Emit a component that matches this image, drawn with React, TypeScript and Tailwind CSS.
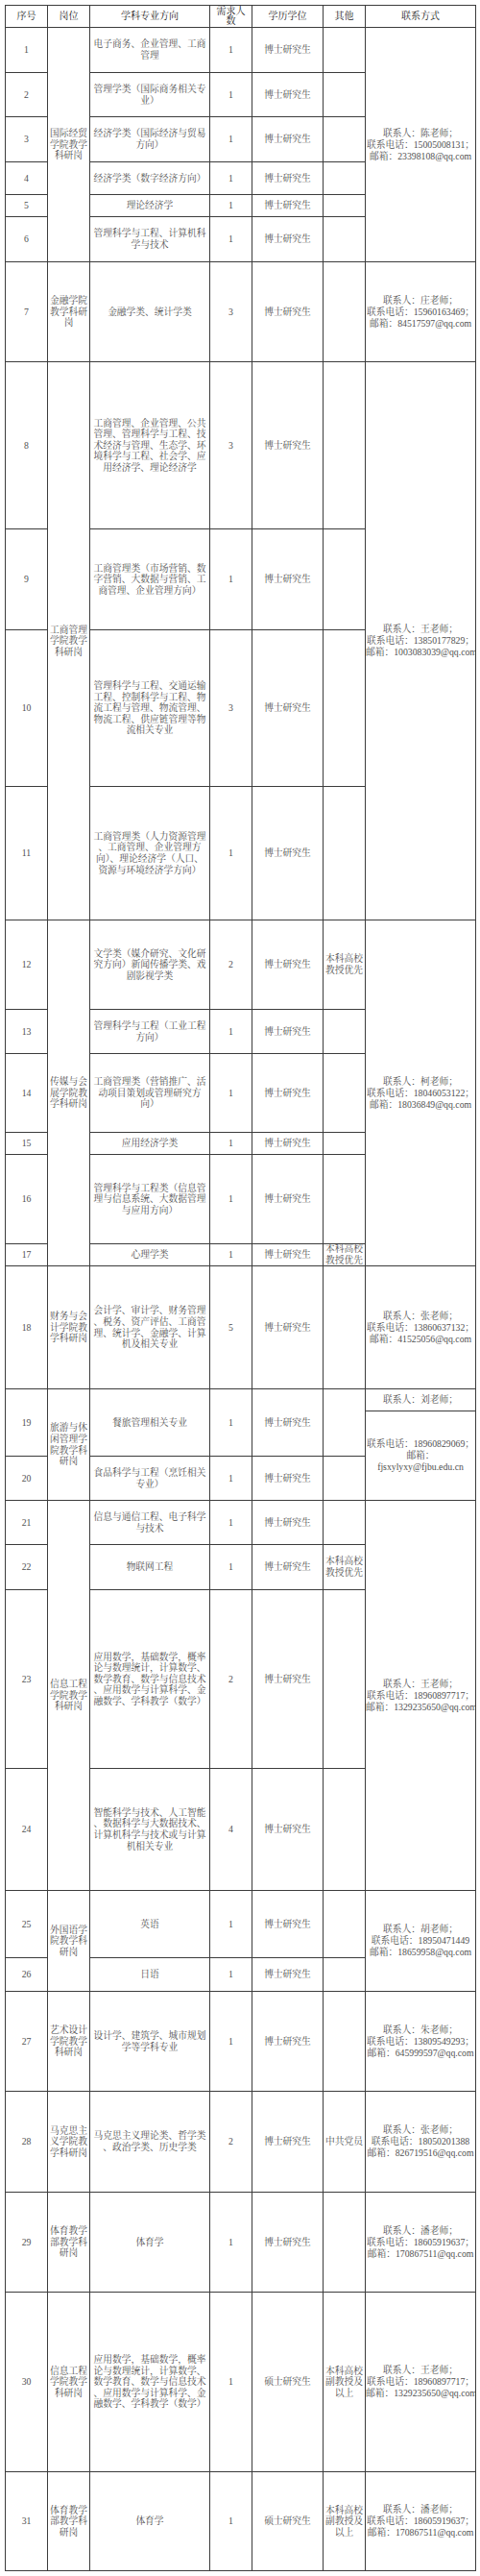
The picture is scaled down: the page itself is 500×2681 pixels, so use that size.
import React from "react";

type Block = { t: string; span?: string };
type Row = {
  n?: string;
  span?: string;
  pos?: Block;
  m?: string;
  c?: string;
  d?: string;
  other?: string;
  contact?: Block;
  extra?: Block;
};

const MATH =
  "应用数学，基础数学，概率|论与数理统计，计算数学、|数学教育、数学与信息技术|、应用数学与计算科学、金|融数学、学科教学（数学）";

const rows: Row[] = [
  {
    n: "1",
    pos: { t: "国际经贸|学院教学|科研岗", span: "row-span-6" },
    m: "电子商务、企业管理、工商|管理",
    c: "1",
    contact: { t: "联系人：陈老师；|联系电话：15005008131；|邮箱：23398108@qq.com", span: "row-span-6" },
  },
  { n: "2", m: "管理学类（国际商务相关专|业）", c: "1" },
  { n: "3", m: "经济学类（国际经济与贸易|方向）", c: "1" },
  { n: "4", m: "经济学类（数字经济方向）", c: "1" },
  { n: "5", m: "理论经济学", c: "1" },
  { n: "6", m: "管理科学与工程、计算机科|学与技术", c: "1" },
  {
    n: "7",
    pos: { t: "金融学院|教学科研|岗" },
    m: "金融学类、统计学类",
    c: "3",
    contact: { t: "联系人：庄老师；|联系电话：15960163469；|邮箱：84517597@qq.com" },
  },
  {
    n: "8",
    pos: { t: "工商管理|学院教学|科研岗", span: "row-span-4" },
    m: "工商管理、企业管理、公共|管理、管理科学与工程、技|术经济与管理、生态学、环|境科学与工程、社会学、应|用经济学、理论经济学",
    c: "3",
    contact: { t: "联系人：王老师；|联系电话：13850177829；|邮箱：1003083039@qq.com", span: "row-span-4" },
  },
  { n: "9", m: "工商管理类（市场营销、数|字营销、大数据与营销、工|商管理、企业管理方向）", c: "1" },
  {
    n: "10",
    m: "管理科学与工程、交通运输|工程、控制科学与工程、物|流工程与管理、物流管理、|物流工程、供应链管理等物|流相关专业",
    c: "3",
  },
  {
    n: "11",
    m: "工商管理类（人力资源管理|、工商管理、企业管理方|向）、理论经济学（人口、|资源与环境经济学方向）",
    c: "1",
  },
  {
    n: "12",
    pos: { t: "传媒与会|展学院教|学科研岗", span: "row-span-6" },
    m: "文学类（媒介研究、文化研|究方向）新闻传播学类、戏|剧影视学类",
    c: "2",
    other: "本科高校|教授优先",
    contact: { t: "联系人：柯老师；|联系电话：18046053122；|邮箱：18036849@qq.com", span: "row-span-6" },
  },
  { n: "13", m: "管理科学与工程（工业工程|方向）", c: "1" },
  { n: "14", m: "工商管理类（营销推广、活|动项目策划或管理研究方|向）", c: "1" },
  { n: "15", m: "应用经济学类", c: "1" },
  { n: "16", m: "管理科学与工程类（信息管|理与信息系统、大数据管理|与应用方向）", c: "1" },
  { n: "17", m: "心理学类", c: "1", other: "本科高校|教授优先" },
  {
    n: "18",
    pos: { t: "财务与会|计学院教|学科研岗" },
    m: "会计学、审计学、财务管理|、税务、资产评估、工商管|理、统计学、金融学、计算|机及相关专业",
    c: "5",
    contact: { t: "联系人：张老师；|联系电话：13860637132；|邮箱：41525056@qq.com" },
  },
  {
    n: "19",
    span: "row-span-2",
    pos: { t: "旅游与休|闲管理学|院教学科|研岗", span: "row-span-3" },
    m: "餐旅管理相关专业",
    c: "1",
    contact: { t: "联系人：刘老师；" },
  },
  { extra: { t: "联系电话：18960829069；|邮箱：|fjsxylyxy@fjbu.edu.cn", span: "row-span-2" } },
  { n: "20", m: "食品科学与工程（烹饪相关|专业）", c: "1" },
  {
    n: "21",
    pos: { t: "信息工程|学院教学|科研岗", span: "row-span-4" },
    m: "信息与通信工程、电子科学|与技术",
    c: "1",
    contact: { t: "联系人：王老师；|联系电话：18960897717；|邮箱：1329235650@qq.com", span: "row-span-4" },
  },
  { n: "22", m: "物联网工程", c: "1", other: "本科高校|教授优先" },
  { n: "23", m: MATH, c: "2" },
  {
    n: "24",
    m: "智能科学与技术、人工智能|、数据科学与大数据技术、|计算机科学与技术或与计算|机相关专业",
    c: "4",
  },
  {
    n: "25",
    pos: { t: "外国语学|院教学科|研岗", span: "row-span-2" },
    m: "英语",
    c: "1",
    contact: { t: "联系人：胡老师；|联系电话：18950471449|邮箱：18659958@qq.com", span: "row-span-2" },
  },
  { n: "26", m: "日语", c: "1" },
  {
    n: "27",
    pos: { t: "艺术设计|学院教学|科研岗" },
    m: "设计学、建筑学、城市规划|学等学科专业",
    c: "1",
    contact: { t: "联系人：朱老师；|联系电话：13809549293；|邮箱：645999597@qq.com" },
  },
  {
    n: "28",
    pos: { t: "马克思主|义学院教|学科研岗" },
    m: "马克思主义理论类、哲学类|、政治学类、历史学类",
    c: "2",
    other: "中共党员",
    contact: { t: "联系人：张老师；|联系电话：18050201388|邮箱：826719516@qq.com" },
  },
  {
    n: "29",
    pos: { t: "体育教学|部教学科|研岗" },
    m: "体育学",
    c: "1",
    contact: { t: "联系人：潘老师；|联系电话：18605919637；|邮箱：170867511@qq.com" },
  },
  {
    n: "30",
    pos: { t: "信息工程|学院教学|科研岗" },
    m: MATH,
    c: "1",
    d: "硕士研究生",
    other: "本科高校|副教授及|以上",
    contact: { t: "联系人：王老师；|联系电话：18960897717；|邮箱：1329235650@qq.com" },
  },
  {
    n: "31",
    pos: { t: "体育教学|部教学科|研岗" },
    m: "体育学",
    c: "1",
    d: "硕士研究生",
    other: "本科高校|副教授及|以上",
    contact: { t: "联系人：潘老师；|联系电话：18605919637；|邮箱：170867511@qq.com" },
  },
];

function Cell({ text = "", span = "", leading = "leading-[11.6px]" }: { text?: string; span?: string; leading?: string }) {
  return (
    <div className={`${span} ${leading} flex flex-col justify-center overflow-hidden bg-white`}>
      {text
        ? text.split("|").map((line, i) => (
            <div key={i} className="whitespace-nowrap text-center">
              {line}
            </div>
          ))
        : null}
    </div>
  );
}

const HEADERS = ["序号", "岗位", "学科专业方向", "需求人|数", "学历学位", "其他", "联系方式"];

export default function App() {
  return (
    <div className="h-[2681px] w-[500px] overflow-hidden bg-white pl-[5px] pt-[5px]">
      <div
        className="grid w-[491px] grid-cols-[43px_43px_124px_43px_73px_43px_114px] grid-rows-[22px_46px_45px_46px_33px_22px_46px_103px_173px_104px_162px_138px_92px_45px_81px_22px_92px_22px_127px_22px_46px_45px_45px_46px_185px_126px_69px_34px_103px_104px_103px_186px_102px] gap-px bg-[#3c3c3c] p-px font-['Liberation_Serif','Noto_Serif_CJK_SC','Noto_Sans_CJK_SC',serif] text-[9.75px] text-[#505050]"
      >
        {HEADERS.map((h) => (
          <div key={h} className="flex flex-col justify-center bg-white text-[#222] leading-[10px] text-[10px]">
            {h.split("|").map((line) => (
              <div key={line} className="whitespace-nowrap text-center">
                {line}
              </div>
            ))}
          </div>
        ))}
        {rows.map((r, i) => {
          if (r.extra) {
            return <Cell key={i} text={r.extra.t} span={r.extra.span} leading="leading-[12px]" />;
          }
          const s = r.span ?? "";
          return (
            <React.Fragment key={i}>
              <Cell text={r.n} span={s} />
              {r.pos ? <Cell text={r.pos.t} span={r.pos.span} /> : null}
              <Cell text={r.m} span={s} />
              <Cell text={r.c} span={s} />
              <Cell text={r.d ?? "博士研究生"} span={s} />
              <Cell text={r.other} span={s} />
              {r.contact ? <Cell text={r.contact.t} span={r.contact.span} leading="leading-[12px]" /> : null}
            </React.Fragment>
          );
        })}
      </div>
    </div>
  );
}
